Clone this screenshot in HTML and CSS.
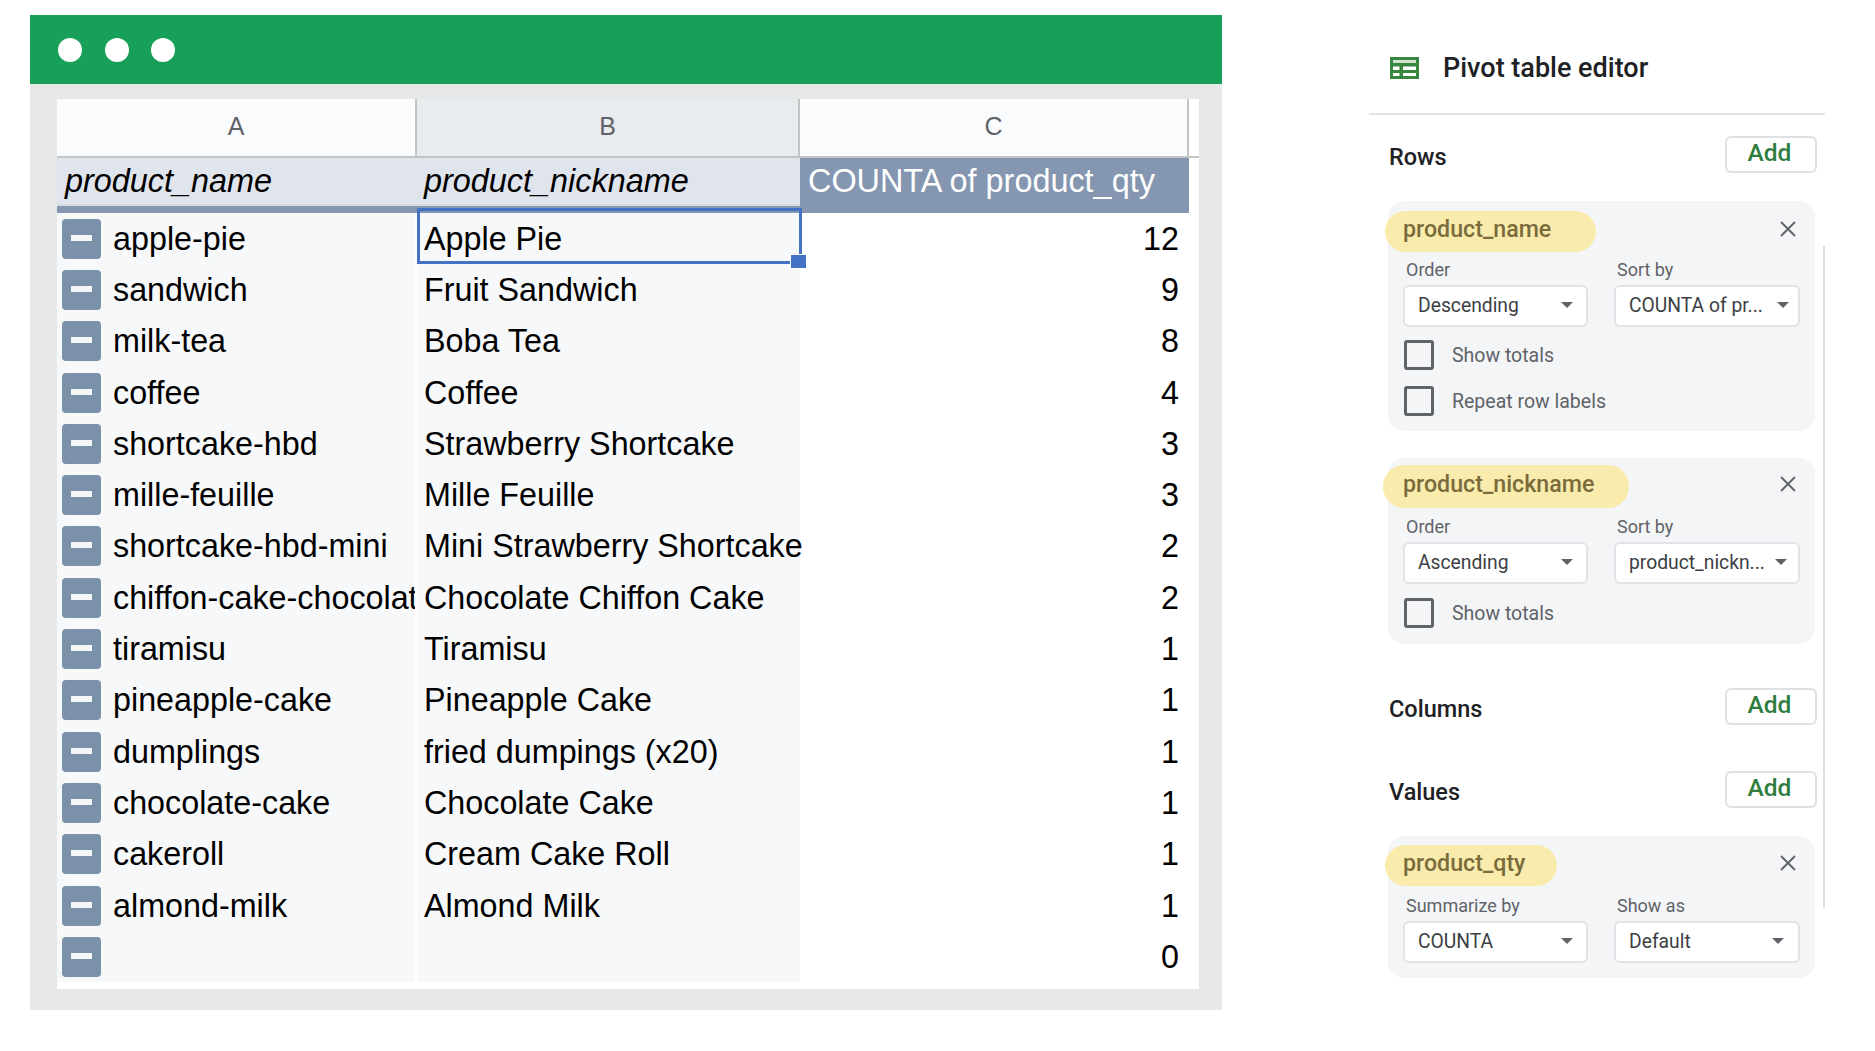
FILE: index.html
```html
<!DOCTYPE html>
<html lang="en">
  <head>
    <meta charset="UTF-8" />
    <meta name="viewport" content="width=device-width, initial-scale=1.0" />
    <title>Pivot table editor</title>
    <link rel="stylesheet" href="styles.css">
  </head>
  <body>
    <div class="window">
      <div class="titlebar">
        <span class="dot"></span>
        <span class="dot"></span>
        <span class="dot"></span>
      </div>
      <div class="sheet">
        <div class="columns">
          <div class="col">A</div>
          <div class="col col-active">B</div>
          <div class="col">C</div>
        </div>
        <div class="heads">
          <div class="head">product_name</div>
          <div class="head">product_nickname</div>
          <div class="head head-value">COUNTA of product_qty</div>
        </div>
        <div class="row">
          <div class="cell cell-name"><span class="toggle"></span><span>apple-pie</span></div>
          <div class="cell cell-nick cell-selected">Apple Pie<span class="handle"></span></div>
          <div class="cell cell-num">12</div>
        </div>
        <div class="row">
          <div class="cell cell-name"><span class="toggle"></span><span>sandwich</span></div>
          <div class="cell cell-nick">Fruit Sandwich</div>
          <div class="cell cell-num">9</div>
        </div>
        <div class="row">
          <div class="cell cell-name"><span class="toggle"></span><span>milk-tea</span></div>
          <div class="cell cell-nick">Boba Tea</div>
          <div class="cell cell-num">8</div>
        </div>
        <div class="row">
          <div class="cell cell-name"><span class="toggle"></span><span>coffee</span></div>
          <div class="cell cell-nick">Coffee</div>
          <div class="cell cell-num">4</div>
        </div>
        <div class="row">
          <div class="cell cell-name"><span class="toggle"></span><span>shortcake-hbd</span></div>
          <div class="cell cell-nick">Strawberry Shortcake</div>
          <div class="cell cell-num">3</div>
        </div>
        <div class="row">
          <div class="cell cell-name"><span class="toggle"></span><span>mille-feuille</span></div>
          <div class="cell cell-nick">Mille Feuille</div>
          <div class="cell cell-num">3</div>
        </div>
        <div class="row">
          <div class="cell cell-name"><span class="toggle"></span><span>shortcake-hbd-mini</span></div>
          <div class="cell cell-nick">Mini Strawberry Shortcake</div>
          <div class="cell cell-num">2</div>
        </div>
        <div class="row">
          <div class="cell cell-name"><span class="toggle"></span><span>chiffon-cake-chocolate</span></div>
          <div class="cell cell-nick">Chocolate Chiffon Cake</div>
          <div class="cell cell-num">2</div>
        </div>
        <div class="row">
          <div class="cell cell-name"><span class="toggle"></span><span>tiramisu</span></div>
          <div class="cell cell-nick">Tiramisu</div>
          <div class="cell cell-num">1</div>
        </div>
        <div class="row">
          <div class="cell cell-name"><span class="toggle"></span><span>pineapple-cake</span></div>
          <div class="cell cell-nick">Pineapple Cake</div>
          <div class="cell cell-num">1</div>
        </div>
        <div class="row">
          <div class="cell cell-name"><span class="toggle"></span><span>dumplings</span></div>
          <div class="cell cell-nick">fried dumpings (x20)</div>
          <div class="cell cell-num">1</div>
        </div>
        <div class="row">
          <div class="cell cell-name"><span class="toggle"></span><span>chocolate-cake</span></div>
          <div class="cell cell-nick">Chocolate Cake</div>
          <div class="cell cell-num">1</div>
        </div>
        <div class="row">
          <div class="cell cell-name"><span class="toggle"></span><span>cakeroll</span></div>
          <div class="cell cell-nick">Cream Cake Roll</div>
          <div class="cell cell-num">1</div>
        </div>
        <div class="row">
          <div class="cell cell-name"><span class="toggle"></span><span>almond-milk</span></div>
          <div class="cell cell-nick">Almond Milk</div>
          <div class="cell cell-num">1</div>
        </div>
        <div class="row">
          <div class="cell cell-name"><span class="toggle"></span><span></span></div>
          <div class="cell cell-nick"></div>
          <div class="cell cell-num">0</div>
        </div>
      </div>
    </div>

    <div class="panel">
      <div class="scrollbar"></div>
      <div class="panel-title">
        <svg class="sheet-icon" viewBox="0 0 29 22" width="29" height="22">
          <path fill="#38873f" fill-rule="evenodd" d="M0 0h29v22H0zM3 3v3h23V3zM3 9.500V13h6.500V9.500zM13 9.500V13h13V9.500zM3 16v3h6.500v-3zM13 16v3h13v-3z" />
          <rect x="3" y="3" width="23" height="3" fill="#cfe2d1" />
        </svg>
        <span>Pivot table editor</span>
      </div>

      <div class="section section-rows">
        <span class="section-name">Rows</span>
        <button class="add" type="button">Add</button>
      </div>

      <div class="card card-first">
        <div class="card-top">
          <span class="pill pill-name">product_name</span>
          <svg class="close" viewBox="0 0 16 16" width="16" height="16"><path d="M1 1l14 14M15 1L1 15" /></svg>
        </div>
        <div class="fields">
          <div class="field">
            <label>Order</label>
            <div class="select"><span>Descending</span><i class="caret"></i></div>
          </div>
          <div class="field">
            <label>Sort by</label>
            <div class="select"><span>COUNTA of pr...</span><i class="caret"></i></div>
          </div>
        </div>
        <div class="check"><span class="box"></span>Show totals</div>
        <div class="check"><span class="box"></span>Repeat row labels</div>
      </div>

      <div class="card card-second">
        <div class="card-top">
          <span class="pill pill-nick">product_nickname</span>
          <svg class="close" viewBox="0 0 16 16" width="16" height="16"><path d="M1 1l14 14M15 1L1 15" /></svg>
        </div>
        <div class="fields">
          <div class="field">
            <label>Order</label>
            <div class="select"><span>Ascending</span><i class="caret"></i></div>
          </div>
          <div class="field">
            <label>Sort by</label>
            <div class="select select-mid"><span>product_nickn...</span><i class="caret"></i></div>
          </div>
        </div>
        <div class="check"><span class="box"></span>Show totals</div>
      </div>

      <div class="section section-columns">
        <span class="section-name">Columns</span>
        <button class="add" type="button">Add</button>
      </div>

      <div class="section section-values">
        <span class="section-name">Values</span>
        <button class="add" type="button">Add</button>
      </div>

      <div class="card card-third">
        <div class="card-top">
          <span class="pill pill-qty">product_qty</span>
          <svg class="close" viewBox="0 0 16 16" width="16" height="16"><path d="M1 1l14 14M15 1L1 15" /></svg>
        </div>
        <div class="fields">
          <div class="field">
            <label>Summarize by</label>
            <div class="select"><span>COUNTA</span><i class="caret"></i></div>
          </div>
          <div class="field">
            <label>Show as</label>
            <div class="select select-far"><span>Default</span><i class="caret"></i></div>
          </div>
        </div>
      </div>
    </div>
  </body>
</html>
```

FILE: styles.css
```css
* {
  box-sizing: border-box;
}
body {
  margin: 0;
  background-color: #fff;
  font-family: "Liberation Sans", Arial, sans-serif;
  display: flex;
  align-items: flex-start;
  padding: 15px 0 0 30px;
}

/* left window */
.window {
  width: 1192px;
  height: 995px;
  background-color: #e7e8e8;
}
.titlebar {
  height: 69px;
  background-color: #18a05a;
  display: flex;
  align-items: center;
  gap: 22.500px;
  padding-left: 28px;
}
.dot {
  width: 24px;
  height: 24px;
  border-radius: 50%;
  background-color: #fff;
}
.sheet {
  width: 1142px;
  height: 890px;
  margin: 15px 0 0 27px;
  background-color: #fff;
}
.columns,
.heads,
.row {
  display: grid;
  grid-template-columns: 360px 383px 389px;
}
.columns {
  height: 59px;
  border-bottom: 2px solid #c3c5c5;
}
.col {
  display: flex;
  align-items: center;
  justify-content: center;
  padding-bottom: 2px;
  background-color: #fafbfd;
  border-right: 2px solid #c3c5c5;
  color: #5f6368;
  font-size: 25px;
}
.col-active {
  background-color: #e9ecef;
}
.heads {
  height: 55px;
}
.head {
  background-color: #e0e4ec;
  border-bottom: 7px solid #8496b0;
  box-shadow: inset 0 -2px #d6dbe6;
  padding-left: 8px;
  font-size: 32.400px;
  font-style: italic;
  line-height: 46px;
  color: #000;
}
.head:nth-child(2) {
  padding-left: 7px;
}
.head-value {
  background-color: #8496b0;
  box-shadow: none;
  font-style: normal;
  color: #fff;
}
.row {
  height: 51.300px;
  font-size: 32.300px;
  color: #000;
}
.cell {
  display: flex;
  align-items: center;
  white-space: nowrap;
  padding-top: 1px;
}
.cell-name {
  background-color: #f7f8fa;
  padding-left: 5px;
  overflow: hidden;
  border-right: 2px solid #fff;
}
.cell-nick {
  position: relative;
  background-color: #f7f8fa;
  padding-left: 7px;
}
.cell-num {
  justify-content: flex-end;
  padding-right: 10px;
}
.toggle {
  position: relative;
  flex: none;
  width: 39px;
  height: 40px;
  margin: -1px 12px 0 0;
  border-radius: 4px;
  background-color: #7b90a9;
}
.toggle::after {
  content: "";
  position: absolute;
  left: 9px;
  right: 9px;
  top: 16px;
  height: 6px;
  background-color: #f4f6f8;
}
.cell-selected::after {
  content: "";
  position: absolute;
  top: -5px;
  left: 0;
  right: -2px;
  bottom: 0;
  border: 3px solid #4472c4;
}
.handle {
  position: absolute;
  z-index: 1;
  right: -6px;
  bottom: -4px;
  width: 15px;
  height: 13px;
  background-color: #4472c4;
  box-shadow: 0 0 0 1px #fff;
}

/* right panel */
.panel {
  position: relative;
  width: 456px;
  margin-left: 147px;
  font-family: Roboto, Arial, sans-serif;
}
.scrollbar {
  position: absolute;
  top: 231px;
  right: 0;
  height: 662px;
  width: 2px;
  background-color: #dddee1;
}
.panel-title {
  height: 100px;
  padding: 42px 0 0 21px;
  display: flex;
  align-items: flex-start;
  gap: 24px;
  border-bottom: 2px solid #e3e3e6;
  font-size: 27px;
  font-weight: 500;
  color: #202124;
}
.panel-title span {
  line-height: 34px;
  margin-top: -6px;
}
.sheet-icon {
  flex: none;
}
.section {
  display: flex;
  justify-content: space-between;
  align-items: center;
  padding: 0 8px 0 20px;
  height: 38px;
}
.section-name {
  font-size: 23.500px;
  font-weight: 500;
  color: #202124;
  padding-top: 5px;
}
.section-rows {
  margin-top: 20px;
}
.section-columns {
  margin-top: 43px;
}
.section-values {
  margin-top: 45px;
}
.add {
  width: 92px;
  height: 37px;
  padding: 0 3px 6px 0;
  background-color: #fff;
  border: 2px solid #dfe0e3;
  border-radius: 6px;
  font-family: Roboto, Arial, sans-serif;
  font-size: 24.500px;
  font-weight: 500;
  color: #2e7d3e;
}
.card {
  width: 427px;
  margin-left: 19px;
  padding: 10px 16px 0 16px;
  background-color: #f4f5f7;
  border-radius: 16px;
}
.card-first {
  margin-top: 28px;
  height: 230px;
}
.card-second {
  margin-top: 27px;
  height: 186px;
  padding-top: 8px;
}
.card-third {
  margin-top: 28px;
  height: 142px;
  padding-top: 9px;
}
.card-top {
  display: flex;
  justify-content: space-between;
  align-items: center;
  height: 41px;
  padding-right: 3px;
}
.pill {
  display: flex;
  align-items: center;
  height: 41px;
  margin-left: -19px;
  padding: 0 0 5px 18px;
  border-radius: 21px;
  background-color: #f9ebab;
  font-size: 23.200px;
  font-weight: 500;
  color: #7a6b3c;
}
.pill-name {
  width: 211px;
}
.pill-nick {
  width: 246px;
  height: 43px;
  margin-left: -21px;
  padding-left: 20px;
}
.pill-qty {
  width: 172px;
}
.close {
  margin-top: -6px;
  fill: none;
  stroke: #5f6368;
  stroke-width: 1.800;
}
.fields {
  display: grid;
  grid-template-columns: 185px 186px;
  column-gap: 26px;
  margin: 5px 0 0 -1px;
}
.card-second .fields {
  margin-top: 7px;
}
.card-third .fields {
  margin-top: 7px;
}
.field label {
  display: block;
  padding-left: 3px;
  font-size: 18px;
  line-height: 26px;
  color: #5f6368;
}
.select {
  display: flex;
  justify-content: space-between;
  align-items: center;
  height: 42px;
  margin-top: 2px;
  padding: 0 13px 2px 13px;
  background-color: #fff;
  border: 2px solid #e1e3e6;
  border-radius: 6px;
  font-size: 19.300px;
  color: #3c4043;
  white-space: nowrap;
}
.field + .field .select {
  padding-right: 9px;
}
.field + .field .select-mid {
  padding-right: 11px;
}
.field + .field .select-far {
  padding-right: 14px;
}
.caret {
  flex: none;
  width: 0;
  height: 0;
  border-left: 6px solid transparent;
  border-right: 6px solid transparent;
  border-top: 6px solid #5f6368;
}
.check {
  display: flex;
  align-items: center;
  gap: 18px;
  height: 30px;
  margin-top: 13px;
  font-size: 19.500px;
  color: #5f6368;
}
.card-second .check {
  margin-top: 14px;
}
.check + .check {
  margin-top: 16px;
}
.box {
  flex: none;
  width: 30px;
  height: 30px;
  border: 3px solid #5f6368;
  border-radius: 3px;
}
```
